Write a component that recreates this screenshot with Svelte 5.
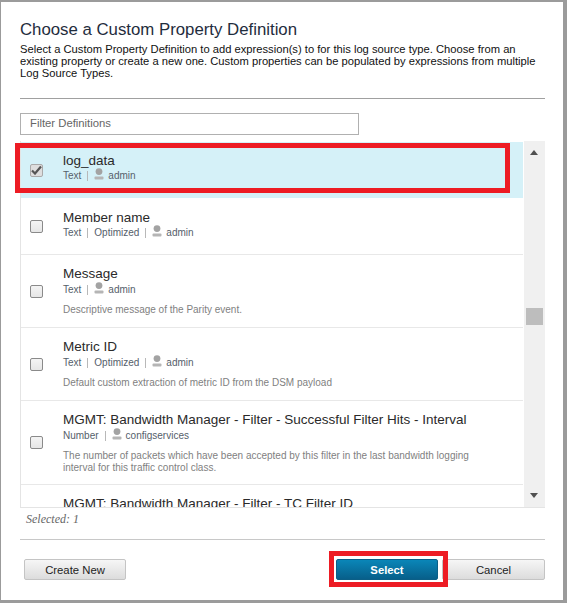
<script>
  const defs = [
    { name: 'log_data', meta: ['Text'], user: 'admin', checked: true },
    { name: 'Member name', meta: ['Text', 'Optimized'], user: 'admin' },
    { name: 'Message', meta: ['Text'], user: 'admin', desc: 'Descriptive message of the Parity event.' },
    { name: 'Metric ID', meta: ['Text', 'Optimized'], user: 'admin', desc: 'Default custom extraction of metric ID from the DSM payload' },
    {
      name: 'MGMT: Bandwidth Manager - Filter - Successful Filter Hits - Interval',
      meta: ['Number'],
      user: 'configservices',
      desc: 'The number of packets which have been accepted by this filter in the last bandwidth logging interval for this traffic control class.'
    },
    { name: 'MGMT: Bandwidth Manager - Filter - TC Filter ID', meta: [], user: '' }
  ];
</script>

<div class="dialog">
  <h1>Choose a Custom Property Definition</h1>
  <p class="intro">
    Select a Custom Property Definition to add expression(s) to for this log source type. Choose from an existing property or create a new one. Custom properties can be populated by expressions from multiple Log Source Types.
  </p>
  <hr class="rule-top" />
  <input class="filter" placeholder="Filter Definitions" />

  <div class="list">
    <div class="rows">
      {#each defs as d}
        <div class="row" class:checked={d.checked} class:long={d.desc && d.desc.length > 80} class:has-desc={d.desc}>
          <span class="box" class:on={d.checked}>
            {#if d.checked}
              <svg width="11" height="10" viewBox="0 0 11 10"><path d="M1 5.5 L4 8.5 L10 1.5" fill="none" stroke="#555" stroke-width="2.2" /></svg>
            {/if}
          </span>
          <div class="info">
            <div class="name">{d.name}</div>
            {#if d.user}
              <div class="meta">
                {#each d.meta as m}
                  <span>{m}</span><span class="sep"></span>
                {/each}
                <svg class="user" width="10" height="12" viewBox="0 0 10 12">
                  <circle cx="5" cy="3.6" r="3.4" fill="#a3a3a3" />
                  <rect x="0.5" y="8.5" width="9" height="3" rx="1" fill="#b5b5b5" />
                </svg>
                <span>{d.user}</span>
              </div>
            {/if}
            {#if d.desc}
              <div class="desc">{d.desc}</div>
            {/if}
          </div>
        </div>
      {/each}
    </div>
    <div class="scrollbar">
      <span class="arrow up"></span>
      <span class="thumb"></span>
      <span class="arrow down"></span>
    </div>
    <div class="mark-row"></div>
  </div>

  <div class="selected">Selected: 1</div>
  <hr class="rule-bottom" />

  <div class="footer">
    <button class="btn">Create New</button>
    <div class="right">
      <button class="btn primary">Select</button>
      <button class="btn cancel">Cancel</button>
      <div class="mark-btn"></div>
    </div>
  </div>
</div>

<style>
  :global(body) {
    margin: 0;
    background: #9b9b9b;
  }
  .dialog {
    box-sizing: border-box;
    width: 562px;
    height: 598px;
    margin: 2px 0 0 1px;
    padding: 18px 18px 0 19px;
    background: #fff;
    font-family: "Liberation Sans", Arial, sans-serif;
    color: #1d2a3a;
  }
  h1 {
    margin: 0;
    font-size: 16.8px;
    font-weight: 400;
    line-height: 20px;
    color: #1f2d3d;
  }
  .intro {
    margin: 3px 0 0;
    font-size: 11.2px;
    line-height: 12px;
    color: #111;
  }
  hr {
    border: none;
    margin: 0;
    height: 1px;
  }
  .rule-top {
    margin-top: 19px;
    background: #a0a0a0;
  }
  .filter {
    display: block;
    box-sizing: border-box;
    width: 339px;
    height: 22px;
    margin-top: 14px;
    padding: 0 9px 2px;
    border: 1px solid #b0b0b0;
    font: 11.3px "Liberation Sans", Arial, sans-serif;
    outline: none;
  }
  .filter::placeholder {
    color: #666;
    opacity: 1;
  }
  .list {
    position: relative;
    display: flex;
    height: 366px;
    margin-top: 6px;
    border-bottom: 1px solid #e4e4e4;
  }
  .rows {
    width: 503px;
    margin-right: 1px;
    border-left: 1px solid #e4e4e4;
    box-sizing: border-box;
    padding-top: 1px;
    overflow: hidden;
  }
  .row {
    display: flex;
    align-items: center;
    box-sizing: border-box;
    height: 56px;
    border-bottom: 1px solid #e8e8e8;
  }
  .row.has-desc {
    height: 73px;
  }
  .row.long {
    height: 84px;
  }
  .row.checked {
    height: 57px;
    background: #d5f1f8;
    border-bottom: 1px solid #fff;
  }
  .row:last-child {
    height: 62px;
  }
  .box {
    display: flex;
    align-items: center;
    justify-content: center;
    box-sizing: border-box;
    flex: none;
    width: 13px;
    height: 13px;
    margin-left: 9px;
    border: 1px solid #8a8a8a;
    border-radius: 2px;
    background: linear-gradient(#f4f4f4, #e6e6e6);
  }
  .box.on {
    background: #dedede;
    border-color: #aaa;
  }
  .info {
    align-self: flex-start;
    margin-left: 20px;
    padding-top: 11px;
    min-width: 0;
  }
  .name {
    font-size: 13.5px;
    line-height: 16px;
    color: #2a2a2a;
    white-space: nowrap;
  }
  .meta {
    display: flex;
    align-items: center;
    font-size: 10px;
    line-height: 14px;
    color: #55606a;
  }
  .has-desc .meta {
    margin-top: 1px;
  }
  .sep {
    width: 1px;
    height: 10px;
    margin: 0 6px;
    background: #b8b8b8;
  }
  .user {
    margin-right: 4px;
    margin-top: -4px;
  }
  .desc {
    max-width: 420px;
    margin-top: 7px;
    font-size: 10px;
    line-height: 12px;
    color: #7f7f7f;
  }
  .scrollbar {
    position: relative;
    flex: none;
    width: 21px;
    background: #f0f0f0;
  }
  .arrow {
    position: absolute;
    left: 6px;
    width: 0;
    height: 0;
    border-left: 4.5px solid transparent;
    border-right: 4.5px solid transparent;
  }
  .arrow.up {
    top: 9px;
    border-bottom: 5px solid #505050;
  }
  .arrow.down {
    bottom: 9px;
    border-top: 5px solid #505050;
  }
  .thumb {
    position: absolute;
    top: 167px;
    left: 2px;
    width: 17px;
    height: 17px;
    background: #bdbdbd;
  }
  .mark-row {
    position: absolute;
    left: -5px;
    top: 2px;
    box-sizing: border-box;
    width: 495px;
    height: 50px;
    border: 5px solid #ed1c24;
  }
  .selected {
    margin-top: 4px;
    padding-left: 6px;
    height: 20px;
    font-family: "Liberation Serif", serif;
    font-style: italic;
    font-size: 12px;
    line-height: 14px;
    color: #666;
  }
  .rule-bottom {
    margin-top: 7px;
    background: #c8c8c8;
  }
  .footer {
    display: flex;
    justify-content: space-between;
    padding: 19px 0 0 4px;
  }
  .right {
    position: relative;
    display: flex;
  }
  .btn {
    box-sizing: border-box;
    width: 102px;
    height: 21px;
    padding: 0;
    border: 1px solid #c4c4c4;
    border-radius: 2px;
    background: linear-gradient(#f6f6f6, #dcdcdc);
    font: 11.3px "Liberation Sans", Arial, sans-serif;
    color: #222;
  }
  .primary {
    border-color: #0b5f87;
    background: linear-gradient(#0a86b8, #075f8a);
    color: #fff;
    font-weight: 700;
  }
  .cancel {
    width: 103px;
    margin-left: 4px;
  }
  .mark-btn {
    position: absolute;
    left: -7px;
    top: -8px;
    box-sizing: border-box;
    width: 119px;
    height: 36px;
    border: 5px solid #ed1c24;
  }
</style>
